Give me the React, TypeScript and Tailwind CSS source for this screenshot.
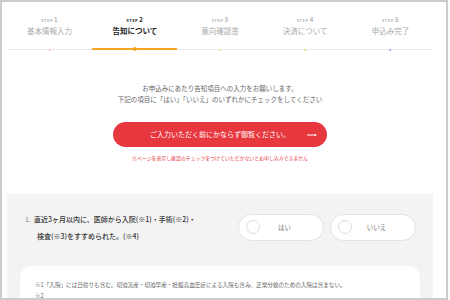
import React from "react";

const steps = [
  { no: "1", label: "基本情報入力", dot: "bg-[#f29a9a]" },
  { no: "2", label: "告知について", dot: "bg-[#f6a623]", active: true },
  { no: "3", label: "意向確認書", dot: "bg-[#f3d34a]" },
  { no: "4", label: "決済について", dot: "bg-[#cfe05c]" },
  { no: "5", label: "申込み完了", dot: "bg-[#9a9ae6]" },
];

const font = { fontFamily: '"Noto Sans CJK JP", "Noto Sans", sans-serif' };

function Stepper() {
  return (
    <div className="grid grid-cols-5 pt-[15px]">
      {steps.map((s) => (
        <div
          key={s.no}
          className={`relative flex flex-col items-center h-[33px] ${
            s.active ? "border-b-2 border-[#f6a623]" : "border-b-[1.5px] border-[#ebebeb]"
          }`}
        >
          <div
            className={`flex items-baseline gap-[1px] leading-none font-bold tracking-[0.5px] ${
              s.active ? "text-[#222]" : "text-[#b5b5b5]"
            }`}
          >
            <span className="text-[4px]">STEP</span>
            <span className="text-[6px]">{s.no}</span>
          </div>
          <div
            className={`mt-[4px] text-[7.5px] leading-none ${
              s.active ? "text-[#222] font-bold" : "text-[#aaa]"
            }`}
          >
            {s.label}
          </div>
          <span
            className={`absolute left-1/2 -translate-x-1/2 rounded-full ${s.dot} ${
              s.active ? "w-[4px] h-[4px] -bottom-[3px]" : "w-[1.5px] h-[2px] -bottom-[2px]"
            }`}
          />
        </div>
      ))}
    </div>
  );
}

function Choice({ label }: { label: string }) {
  return (
    <div className="w-[86px] h-[27px] rounded-full border border-[#e2e2e2] bg-white flex items-center pl-[7px]">
      <span className="w-[14px] h-[14px] rounded-full border border-[#dcdcdc] bg-white" />
      <span className="flex-1 text-center pr-[14px] text-[6.5px] text-[#777]">{label}</span>
    </div>
  );
}

export default function App() {
  return (
    <div
      className="w-[448px] h-[300px] border-2 border-[#cccccc] bg-white overflow-hidden"
      style={font}
    >
      <div className="w-[426px] ml-[5px]">
        <Stepper />

        <div className="mt-[33px] flex flex-col items-center text-[6.5px] leading-[11px] text-[#666]">
          <p>お申込みにあたり告知項目への入力をお願いします。</p>
          <p>下記の項目に「はい」「いいえ」のいずれかにチェックをしてください</p>
        </div>

        <div className="mt-[17px] flex justify-center">
          <button className="relative w-[214px] h-[25px] rounded-full bg-[#e8383f] text-white text-[7px] flex items-center justify-center">
            <span>ご入力いただく前にかならず御覧ください。</span>
            <svg
              className="absolute right-[10px] top-1/2 -translate-y-1/2"
              width="10"
              height="4"
              viewBox="0 0 10 4"
            >
              <path d="M0 2 H9" stroke="white" strokeWidth="1" />
              <path d="M7.5 0.8 L10 2 L7.5 3.2 Z" fill="white" />
            </svg>
          </button>
        </div>

        <p className="mt-[9px] text-center text-[4.9px] leading-none text-[#e8383f]">
          ※ページを表示し確認のチェックをつけていただかないとお申し込みできません
        </p>

        <div className="mt-[33px] bg-[#f3f3f3] h-[120px] pt-[17px]">
          <div className="flex items-start justify-between pl-[18px] pr-[17px]">
            <div className="text-[7px] leading-[17px] text-[#333] font-medium">
              <div className="flex">
                <span className="w-[9px] text-[#888] font-normal">1.</span>
                <span>直近3ヶ月以内に、医師から入院(※1)・手術(※2)・</span>
              </div>
              <div className="pl-[12px]">検査(※3)をすすめられた。(※4)</div>
            </div>
            <div className="flex gap-[6px] mt-[3px]">
              <Choice label="はい" />
              <Choice label="いいえ" />
            </div>
          </div>

          <div className="mt-[21px] mx-[13px] bg-white rounded-t-[12px] h-[60px] pt-[13px] pl-[15px] text-[5.6px] leading-[13px] text-[#666]">
            <p>※1「入院」には日帰りも含む。切迫流産・切迫早産・妊娠高血圧症による入院も含み、正常分娩のための入院は含まない。</p>
            <p className="leading-[8px]">※2</p>
          </div>
        </div>
      </div>
    </div>
  );
}
